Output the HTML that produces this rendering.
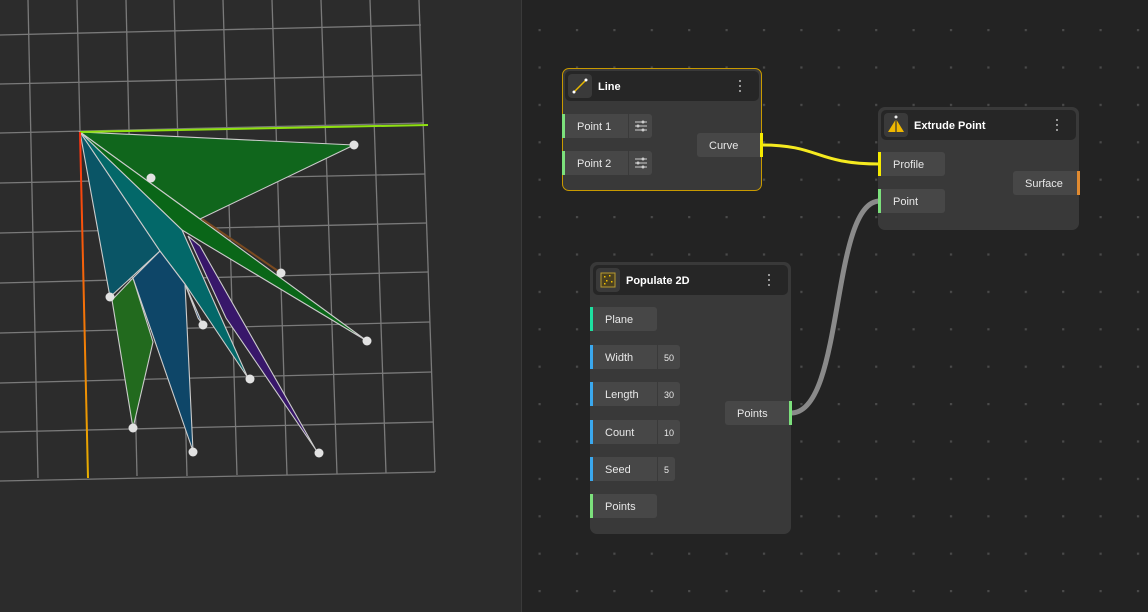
<!DOCTYPE html>
<html><head><meta charset="utf-8"><style>
html,body{margin:0;padding:0;}
body{width:1148px;height:612px;position:relative;overflow:hidden;background:#232323;font-family:"Liberation Sans",sans-serif;}
#left{position:absolute;left:0;top:0;width:521px;height:612px;background:#2c2c2c;}
#div{position:absolute;left:521px;top:0;width:1px;height:612px;background:#3a3a3a;}
.node{position:absolute;background:#393939;border-radius:7px;}
.hdr{position:absolute;left:3px;right:3px;top:3px;height:30px;background:#262626;border-radius:5px;}
.ic{position:absolute;left:3px;top:3px;width:24px;height:24px;background:#3a3a3a;border-radius:4px;}
.ttl{position:absolute;left:33px;top:10px;color:#fff;font-weight:bold;font-size:11px;}
.dots{position:absolute;right:18px;top:9px;width:2px;}
.dots i{display:block;width:2px;height:2px;background:#bbb;margin-bottom:3px;border-radius:1px;}
.row{position:absolute;height:24px;background:#474747;border-radius:0 3px 3px 0;color:#e8e8e8;font-size:11px;line-height:26px;box-sizing:border-box;padding-left:15px;}
.row .bar{position:absolute;left:0;top:0;width:3px;height:24px;}
.row .val{position:absolute;right:0;top:0;height:24px;border-left:1px solid #3a3a3a;font-size:9px;text-align:center;box-sizing:border-box;}
.out{position:absolute;height:24px;background:#474747;border-radius:3px 0 0 3px;color:#e8e8e8;font-size:11px;line-height:26px;box-sizing:border-box;padding-left:12px;}
.out .bar{position:absolute;right:0;top:0;width:3px;height:24px;}
</style></head><body>
<div id="left">
<svg width="521" height="612" style="position:absolute;left:0;top:0">
<g stroke="#7a7a7a" stroke-width="1.3" fill="none">
<line x1="28" y1="0" x2="38" y2="478"/><line x1="77" y1="0" x2="88" y2="478"/><line x1="126" y1="0" x2="137" y2="476"/><line x1="174" y1="0" x2="187" y2="476"/><line x1="223" y1="0" x2="237" y2="475"/><line x1="272" y1="0" x2="287" y2="475"/><line x1="321" y1="0" x2="337" y2="474"/><line x1="370" y1="0" x2="386" y2="473"/><line x1="419" y1="0" x2="435" y2="472"/>
<line x1="0" y1="35" x2="421" y2="25"/><line x1="0" y1="84" x2="422" y2="75"/><line x1="0" y1="133" x2="424" y2="123"/><line x1="0" y1="183" x2="425" y2="174"/><line x1="0" y1="233" x2="427" y2="223"/><line x1="0" y1="283" x2="428" y2="272"/><line x1="0" y1="333" x2="430" y2="322"/><line x1="0" y1="383" x2="432" y2="372"/><line x1="0" y1="432" x2="433" y2="422"/><line x1="0" y1="481" x2="435" y2="472"/>
</g>
<defs><linearGradient id="ya" x1="0" y1="0" x2="0" y2="1"><stop offset="0" stop-color="#ff3010"/><stop offset="1" stop-color="#e8b000"/></linearGradient></defs>
<g stroke="#ccc" stroke-width="1.1">
<polygon points="80,132 354,145 200,219" fill="#10661c"/>
<polygon points="80,132 200,219 367,341 182,230" fill="#0a6618"/>
<polygon points="80,132 160,251 110,297" fill="#0a5566"/>
<polygon points="112,300 133,278 153,342 133,428" fill="#226a1e"/>
<polygon points="133,278 160,251 185,284 193,451" fill="#0e4668"/>
<polygon points="185,284 203,325 198,318" fill="#0e3d70"/>
<polygon points="188,236 200,246 316,450 226,318" fill="#38176a"/>
<polygon points="80,132 182,230 248,378 185,284 160,251" fill="#036869"/>
</g>
<line x1="202" y1="219" x2="278" y2="271" stroke="#7a4a20" stroke-width="2"/>
<line x1="80" y1="132" x2="428" y2="125" stroke="#8ee010" stroke-width="2"/>
<line x1="80" y1="132" x2="88" y2="478" stroke="url(#ya)" stroke-width="2"/>
<g fill="#e2e2e2">
<circle cx="354" cy="145" r="4.5"/><circle cx="151" cy="178" r="4.5"/><circle cx="281" cy="273" r="4.5"/><circle cx="367" cy="341" r="4.5"/><circle cx="110" cy="297" r="4.5"/><circle cx="203" cy="325" r="4.5"/><circle cx="250" cy="379" r="4.5"/><circle cx="133" cy="428" r="4.5"/><circle cx="193" cy="452" r="4.5"/><circle cx="319" cy="453" r="4.5"/>
</g>
</svg>
</div>
<div id="div"></div>
<svg width="1148" height="612" style="position:absolute;left:0;top:0">
<defs><pattern id="dp" x="538.5" y="29" width="37.4" height="37.4" patternUnits="userSpaceOnUse"><rect x="0" y="0" width="2.2" height="2.2" fill="#4a4a4a"/></pattern></defs>
<rect x="522" y="0" width="626" height="612" fill="url(#dp)"/>
<path d="M762,145 C820,145 815,164 880,164" stroke="#f5ea20" stroke-width="3" fill="none"/>
<path d="M791,413 C845,413 830,201 880,201" stroke="#8a8a8a" stroke-width="5" fill="none"/>
</svg>

<div class="node" style="left:562px;top:68px;width:200px;height:123px;border:1px solid #c89a00;box-sizing:border-box;">
 <div class="hdr" style="left:2px;right:2px;top:2px;"><div class="ic"><svg width="24" height="24"><line x1="6" y1="18" x2="18" y2="6" stroke="#e8b800" stroke-width="1.5"/><circle cx="6" cy="18" r="1.5" fill="#fff"/><circle cx="18" cy="6" r="1.5" fill="#fff"/></svg></div><div class="ttl">Line</div><div class="dots"><i></i><i></i><i></i></div></div>
</div>
<div class="row" style="left:562px;top:114px;width:90px;">Point 1<div class="bar" style="background:#7ce07c"></div><div class="val" style="width:24px"><svg width="22" height="24"><g stroke="#ccc" stroke-width="1"><line x1="5" y1="8" x2="17" y2="8"/><line x1="5" y1="12" x2="17" y2="12"/><line x1="5" y1="16" x2="17" y2="16"/></g><g fill="#ccc"><circle cx="13" cy="8" r="1.5"/><circle cx="8" cy="12" r="1.5"/><circle cx="13" cy="16" r="1.5"/></g></svg></div></div>
<div class="row" style="left:562px;top:151px;width:90px;">Point 2<div class="bar" style="background:#7ce07c"></div><div class="val" style="width:24px"><svg width="22" height="24"><g stroke="#ccc" stroke-width="1"><line x1="5" y1="8" x2="17" y2="8"/><line x1="5" y1="12" x2="17" y2="12"/><line x1="5" y1="16" x2="17" y2="16"/></g><g fill="#ccc"><circle cx="13" cy="8" r="1.5"/><circle cx="8" cy="12" r="1.5"/><circle cx="13" cy="16" r="1.5"/></g></svg></div></div>
<div class="out" style="left:697px;top:133px;width:66px;">Curve<div class="bar" style="background:#f5ea00"></div></div>

<div class="node" style="left:878px;top:107px;width:201px;height:123px;">
 <div class="hdr"><div class="ic"><svg width="24" height="24"><polygon points="12,6 20,19 4,19" fill="#f0b800"/><line x1="12" y1="4" x2="12" y2="19" stroke="#333" stroke-width="1.2"/><circle cx="12" cy="4" r="1.5" fill="#eee"/></svg></div><div class="ttl" style="left:33px">Extrude Point</div><div class="dots"><i></i><i></i><i></i></div></div>
</div>
<div class="row" style="left:878px;top:152px;width:67px;">Profile<div class="bar" style="background:#f5ea00"></div></div>
<div class="row" style="left:878px;top:189px;width:67px;">Point<div class="bar" style="background:#7ce07c"></div></div>
<div class="out" style="left:1013px;top:171px;width:67px;">Surface<div class="bar" style="background:#e08a30"></div></div>

<div class="node" style="left:590px;top:262px;width:201px;height:272px;">
 <div class="hdr"><div class="ic"><svg width="24" height="24"><rect x="5" y="5" width="14" height="14" fill="#4a4020" stroke="#b89a30" stroke-width="1"/><g fill="#f0c000"><rect x="8" y="8" width="1.5" height="1.5"/><rect x="13" y="7" width="1.5" height="1.5"/><rect x="10" y="12" width="1.5" height="1.5"/><rect x="15" y="13" width="1.5" height="1.5"/><rect x="8" y="15" width="1.5" height="1.5"/></g></svg></div><div class="ttl">Populate 2D</div><div class="dots"><i></i><i></i><i></i></div></div>
</div>
<div class="row" style="left:590px;top:307px;width:67px;">Plane<div class="bar" style="background:#1de0a0"></div></div>
<div class="row" style="left:590px;top:345px;width:90px;">Width<div class="bar" style="background:#3aa8ee"></div><div class="val" style="width:23px">50</div></div>
<div class="row" style="left:590px;top:382px;width:90px;">Length<div class="bar" style="background:#3aa8ee"></div><div class="val" style="width:23px">30</div></div>
<div class="row" style="left:590px;top:420px;width:90px;">Count<div class="bar" style="background:#3aa8ee"></div><div class="val" style="width:23px">10</div></div>
<div class="row" style="left:590px;top:457px;width:85px;">Seed<div class="bar" style="background:#3aa8ee"></div><div class="val" style="width:18px">5</div></div>
<div class="row" style="left:590px;top:494px;width:67px;">Points<div class="bar" style="background:#7ce07c"></div></div>
<div class="out" style="left:725px;top:401px;width:67px;">Points<div class="bar" style="background:#7ce07c"></div></div>
</body></html>
